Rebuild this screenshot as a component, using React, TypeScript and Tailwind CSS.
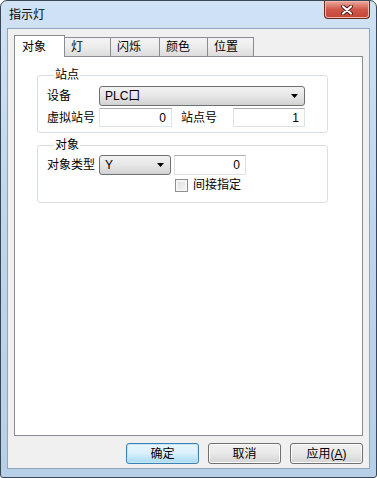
const font = "font-['Liberation_Sans','Noto_Sans_CJK_SC',sans-serif]"

function Arrow() {
  return (
    <svg width="7" height="4" viewBox="0 0 7 4" className="shrink-0">
      <path d="M0 0H7L3.5 4Z" fill="#000" />
    </svg>
  )
}

function Combo({ value, className }: { value: string; className: string }) {
  return (
    <div
      className={`flex h-[20px] items-center justify-between rounded-[3px] border border-[#707070] bg-gradient-to-b from-[#f2f2f2] via-[#e6e6e6] to-[#d2d2d2] pl-[5px] pr-[6px] ${className}`}
    >
      <span className="leading-[14px]">{value}</span>
      <Arrow />
    </div>
  )
}

function Field({ value, className }: { value: string; className: string }) {
  return (
    <div
      className={`flex h-[19px] items-center justify-end border border-[#dde2e8] border-t-[#abadb3] bg-white pr-[5px] ${className}`}
    >
      <span className="leading-[14px]">{value}</span>
    </div>
  )
}

function Tab({ label, active, width }: { label: string; active?: boolean; width: string }) {
  if (active) {
    return (
      <div
        className={`relative z-10 -mb-px flex h-[22px] items-center border border-b-0 border-[#898c95] bg-white pl-[7px] ${width}`}
      >
        <span className="leading-[14px]">{label}</span>
      </div>
    )
  }
  return (
    <div
      className={`-ml-px flex h-[19px] items-center border border-b-0 border-[#898c95] bg-gradient-to-b from-[#f4f4f4] via-[#ececec] to-[#dcdcdc] pl-[6px] ${width}`}
    >
      <span className="leading-[14px]">{label}</span>
    </div>
  )
}

function Button({ children, primary }: { children: React.ReactNode; primary?: boolean }) {
  return (
    <button
      className={`flex h-[21px] w-[73px] items-center justify-center rounded-[3px] border ${
        primary
          ? "border-[#3c7fb1] bg-gradient-to-b from-[#eaf6fd] via-[#d9f0fc] to-[#a7d9f5] shadow-[inset_0_0_0_1px_#bfe6f9]"
          : "border-[#707070] bg-gradient-to-b from-[#f2f2f2] via-[#e8e8e8] to-[#d4d4d4] shadow-[inset_0_0_0_1px_#fbfbfb]"
      }`}
    >
      <span className="leading-[14px]">{children}</span>
    </button>
  )
}

export default function App() {
  return (
    <div className={`h-[478px] w-[377px] text-[12px] text-black ${font}`}>
      <div className="flex h-full flex-col rounded-t-[7px] rounded-b-[3px] border border-[#3a4756] bg-gradient-to-b from-[#d0e2f4] via-[#bfd5ec] to-[#b8cfe8] px-[6px] pb-[8px]">
        {/* title bar */}
        <div className="flex h-[27px] items-start justify-between">
          <span className="pl-[2px] pt-[7px] leading-[14px]">指示灯</span>
          <div className="flex h-[18px] w-[46px] items-center justify-center rounded-b-[4px] border border-t-0 border-[#6b2a22] bg-gradient-to-b from-[#e9a99c] via-[#d0584a] to-[#c44434] shadow-[inset_0_0_0_1px_#f2b7aa]">
            <svg width="14" height="10" viewBox="0 0 14 10">
              <path d="M3 1.5L11 8.5M11 1.5L3 8.5" stroke="#4a1d18" strokeWidth="4" strokeLinecap="round" />
              <path d="M3 1.5L11 8.5M11 1.5L3 8.5" stroke="#fff" strokeWidth="2.2" strokeLinecap="round" />
            </svg>
          </div>
        </div>

        {/* client area */}
        <div className="flex flex-1 flex-col border border-[#8fa5be] bg-[#f0f0f0] px-[6px] pb-[4px] pt-[6px]">
          <div className="flex h-[21px] items-end">
            <Tab label="对象" active width="w-[51px]" />
            <Tab label="灯" width="w-[47px]" />
            <Tab label="闪烁" width="w-[50px]" />
            <Tab label="颜色" width="w-[49px]" />
            <Tab label="位置" width="w-[47px]" />
          </div>

          <div className="flex flex-1 flex-col border border-[#898c95] bg-white pl-[22px] pt-[11px]">
            <fieldset className="w-[291px] rounded-[3px] border border-[#d5dfe5] pb-[5px] pl-[9px] pt-[4px]">
              <legend className="ml-[7px] px-[1px] leading-[14px]">站点</legend>
              <div className="flex items-center">
                <span className="w-[52px] leading-[14px]">设备</span>
                <Combo value="PLC口" className="w-[206px]" />
              </div>
              <div className="mt-[2px] flex items-center">
                <span className="w-[52px] leading-[14px]">虚拟站号</span>
                <Field value="0" className="w-[73px]" />
                <span className="ml-[9px] w-[52px] leading-[14px]">站点号</span>
                <Field value="1" className="w-[72px]" />
              </div>
            </fieldset>

            <fieldset className="mt-[5px] w-[291px] rounded-[3px] border border-[#d5dfe5] pb-[10px] pl-[9px] pt-[3px]">
              <legend className="ml-[7px] px-[1px] leading-[14px]">对象</legend>
              <div className="flex items-center">
                <span className="w-[52px] leading-[14px]">对象类型</span>
                <Combo value="Y" className="w-[72px]" />
                <Field value="0" className="ml-[3px] h-[20px] w-[72px]" />
              </div>
              <div className="ml-[128px] mt-[3px] flex items-center">
                <span className="h-[13px] w-[13px] border border-[#8f8f8f] bg-gradient-to-br from-[#dcdcdc] to-[#f6f6f6] shadow-[inset_0_0_0_2px_#f4f4f4]" />
                <span className="ml-[5px] leading-[14px]">间接指定</span>
              </div>
            </fieldset>
          </div>

          <div className="mt-[7px] flex justify-end gap-[9px]">
            <Button primary>确定</Button>
            <Button>取消</Button>
            <Button>
              应用(<span className="underline">A</span>)
            </Button>
          </div>
        </div>
      </div>
    </div>
  )
}
